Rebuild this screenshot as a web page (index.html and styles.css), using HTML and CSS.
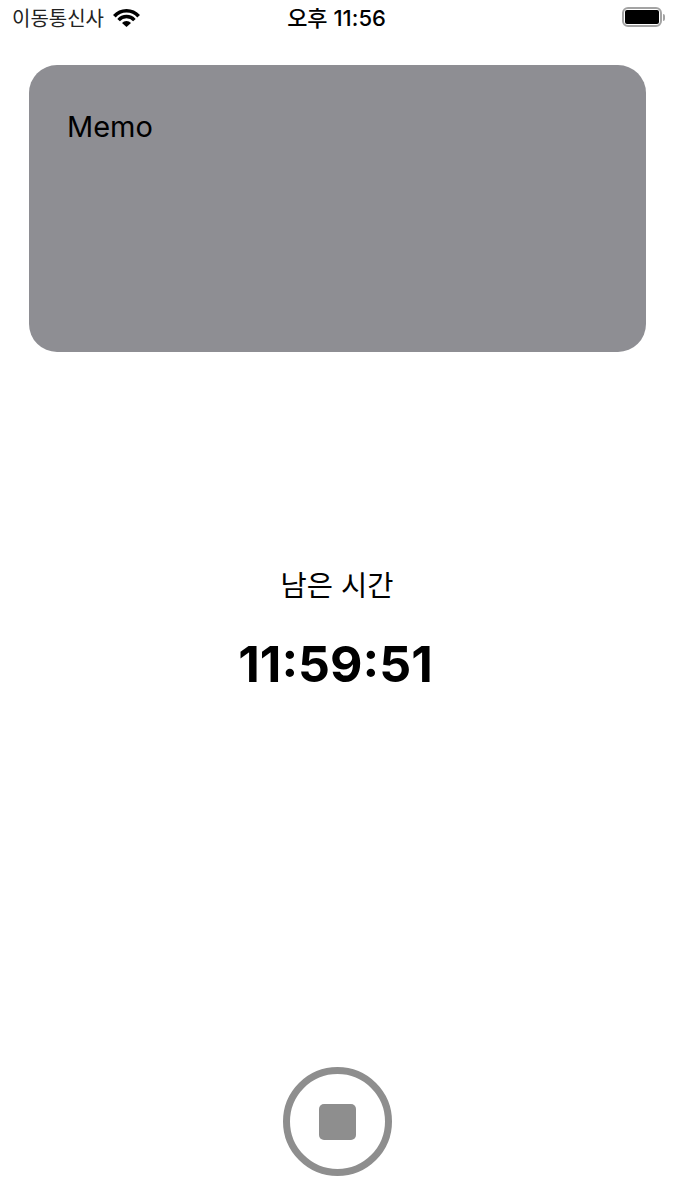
FILE: index.html
```html
<!DOCTYPE html>
<html lang="ko">
<head>
<meta charset="UTF-8" />
<meta name="viewport" content="width=device-width, initial-scale=1" />
<title>Timer</title>
<link rel="stylesheet" href="styles.css">
</head>
<body>

<div class="screen">
  <div class="status-bar">
    <div class="status-left">
      <span class="carrier">이동통신사</span>
      <svg class="wifi" viewBox="0 0 27 18" width="27" height="18">
        <path class="wifi-arc" stroke-width="3.6" d="M1.35 7.3A16.2 16.2 0 0 1 25.65 7.3"/>
        <path class="wifi-arc" stroke-width="3.4" d="M5.6 11.1A10.5 10.5 0 0 1 21.4 11.1"/>
        <path d="M13.5 18L9 14A6 6 0 0 1 18 14Z"/>
      </svg>
    </div>
    <div class="status-time">오후 11:56</div>
    <div class="battery">
      <div class="battery-body"><div class="battery-fill"></div></div>
      <div class="battery-cap"></div>
    </div>
  </div>

  <div class="memo-card">Memo</div>

  <div class="timer">
    <div class="timer-label">남은 시간</div>
    <div class="timer-value">11:59:51</div>
  </div>

  <div class="controls">
    <button class="stop-btn"><span class="stop-icon"></span></button>
  </div>
</div>

</body>
</html>
```

FILE: styles.css
```css
body {
  margin: 0;
  background: #fff;
  color: #000;
  font-family: Inter, "Noto Sans CJK KR", sans-serif;
}

.screen {
  height: 1200px;
  display: flex;
  flex-direction: column;
  overflow: hidden;
}

.status-bar {
  height: 36px;
  padding: 0 10px 0 12px;
  display: grid;
  grid-template-columns: 1fr auto 1fr;
  align-items: center;
}

.status-left {
  display: flex;
  align-items: center;
  gap: 9px;
}

.carrier {
  font-size: 20px;
  color: #222;
  margin-top: -2px;
}

.wifi {
  fill: #000;
  margin-top: -1px;
}

.wifi-arc {
  fill: none;
  stroke: #000;
}

.status-time {
  font-size: 22px;
  font-weight: 500;
  padding-right: 4px;
  margin-top: -4px;
}

.battery {
  justify-self: end;
  display: flex;
  align-items: center;
  gap: 1px;
  margin-top: -2px;
}

.battery-body {
  width: 40px;
  height: 20px;
  box-sizing: border-box;
  padding: 1px;
  border: 2px solid #a3a3a3;
  border-radius: 6px;
}

.battery-fill {
  height: 100%;
  background: #000;
  border-radius: 2px;
}

.battery-cap {
  width: 2px;
  height: 7px;
  background: #a3a3a3;
  border-radius: 0 2px 2px 0;
}

.memo-card {
  height: 287px;
  margin: 29px 29px 0;
  padding: 44px 38px 0;
  box-sizing: border-box;
  background: #8e8e93;
  border-radius: 28px;
  font-size: 29px;
  line-height: 36px;
}

.timer {
  margin-top: 214px;
  text-align: center;
}

.timer-label {
  font-size: 28.5px;
  line-height: 40px;
  padding-right: 1px;
}

.timer-value {
  margin-top: 26px;
  padding-right: 4px;
  font-size: 50px;
  line-height: 64px;
  font-weight: 700;
}

.controls {
  margin-top: auto;
  padding-bottom: 24px;
  display: flex;
  justify-content: center;
}

.stop-btn {
  width: 109px;
  height: 109px;
  padding: 0;
  display: flex;
  align-items: center;
  justify-content: center;
  background: #fff;
  border: 7px solid #8e8e8e;
  border-radius: 50%;
}

.stop-icon {
  width: 37px;
  height: 36px;
  background: #8e8e8e;
  border-radius: 5px;
}
```
